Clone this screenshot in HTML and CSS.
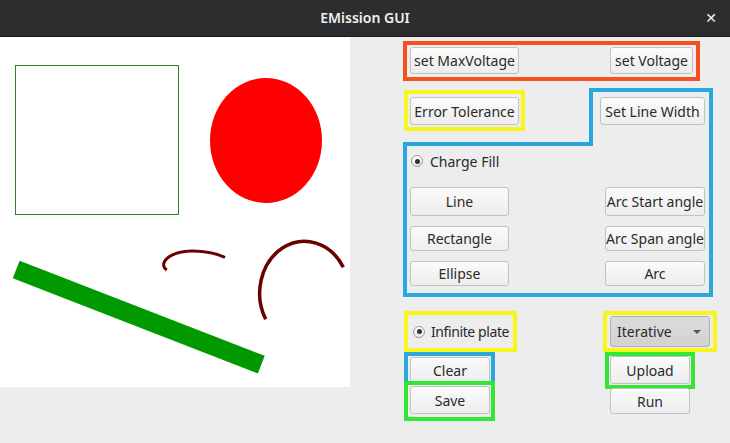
FILE: index.html
```html
<!DOCTYPE html>
<html>
<head>
<meta charset="utf-8">
<link rel="stylesheet" href="styles.css">
</head>
<body>
<div class="window">
  <div class="titlebar">
    <span class="title">EMission GUI</span>
    <span class="close">&#x2715;</span>
  </div>
  <div class="main">
    <div class="canvas">
      <svg width="350" height="350" viewBox="0 0 350 350">
        <rect x="15.5" y="28.5" width="163" height="149" fill="none" stroke="#2a882a" stroke-width="1"/>
        <ellipse cx="266" cy="103.5" rx="56" ry="62.5" fill="#ff0000"/>
        <line x1="16.2" y1="232.5" x2="261.3" y2="327.7" stroke="#009a00" stroke-width="19"/>
        <path d="M166.7,233 C158,227 168,214.5 192,214 C207,214 218,217 225,220.5" fill="none" stroke="#6b0000" stroke-width="3"/>
        <path d="M265.7,282.3 A44,51 0 1 1 343.3,230.3" fill="none" stroke="#6b0000" stroke-width="3.5"/>
      </svg>
    </div>
    <div class="panel">
      <div class="box orange row-voltage">
        <button class="btn w109">set MaxVoltage</button>
        <button class="btn w82">set Voltage</button>
      </div>
      <div class="row-tol">
        <div class="box yellow tol">
          <button class="btn w109 h28">Error Tolerance</button>
        </div>
        <div class="blue-tab">
          <button class="btn w105 h28">Set Line Width</button>
        </div>
      </div>
      <div class="blue-body">
        <label class="radio-row">
          <span class="radio"><span class="dot"></span></span>
          <span>Charge Fill</span>
        </label>
        <div class="shape-grid">
          <button class="btn w99 h29">Line</button>
          <button class="btn w100 h29">Arc Start angle</button>
          <button class="btn w99 h25">Rectangle</button>
          <button class="btn w100 h25">Arc Span angle</button>
          <button class="btn w99 h25">Ellipse</button>
          <button class="btn w100 h25">Arc</button>
        </div>
      </div>
      <div class="bottom">
        <div class="col-left">
          <div class="box yellow plate">
            <label class="radio-row plate-row">
              <span class="radio"><span class="dot"></span></span>
              <span class="plate-text">Infinite plate</span>
            </label>
          </div>
          <div class="clear-box">
            <button class="btn w80 h26">Clear</button>
          </div>
          <div class="box green save-box">
            <button class="btn w80 h28">Save</button>
          </div>
        </div>
        <div class="col-right">
          <div class="box yellow combo-box">
            <div class="combo">
              <span>Iterative</span>
              <span class="arrow"></span>
            </div>
          </div>
          <div class="box green upload-box">
            <button class="btn w80 h28">Upload</button>
          </div>
          <button class="btn w80 h26 run">Run</button>
        </div>
      </div>
    </div>
  </div>
</div>
</body>
</html>
```

FILE: styles.css
```css
* { box-sizing: border-box; }
html, body { margin: 0; padding: 0; }
body {
  width: 730px;
  height: 443px;
  overflow: hidden;
  background: #ededed;
  font-family: "Noto Sans", "DejaVu Sans", sans-serif;
  font-size: 14px;
  color: #2a2a2a;
}
.window { width: 730px; height: 443px; display: flex; flex-direction: column; }
.titlebar {
  height: 37px;
  background: #2c2d2f;
  border-bottom: 1px solid #1a1a1a;
  display: flex;
  align-items: center;
  justify-content: center;
  position: relative;
  flex: none;
}
.title {
  color: #f0f0ee;
  font-weight: 600;
  font-size: 14px;
  margin-top: -1px;
}
.close {
  position: absolute;
  right: 13px;
  top: 8px;
  color: #f4f4f4;
  font-weight: bold;
  font-size: 14px;
}
.main { display: flex; flex: 1; align-items: flex-start; }
.canvas { width: 350px; height: 350px; background: #ffffff; flex: none; }
.canvas svg { display: block; }
.panel { padding-left: 53px; width: 380px; display: flex; flex-direction: column; }

.btn {
  font-family: "Noto Sans", "DejaVu Sans", sans-serif;
  font-size: 14px;
  font-weight: 400;
  color: #2a2a2a;
  background: linear-gradient(#fbfbfb, #ededed);
  border: 1px solid #c2c2c2;
  border-radius: 3px;
  height: 27px;
  padding: 0;
  margin: 0;
  display: flex;
  align-items: center;
  justify-content: center;
  white-space: nowrap;
  flex: none;
}
.w80 { width: 80px; }
.w82 { width: 83px; }
.w99 { width: 99px; }
.w100 { width: 100px; }
.w105 { width: 105px; }
.w109 { width: 109px; }
.h25 { height: 25px; }
.h26 { height: 26px; }
.h28 { height: 28px; }
.h29 { height: 29px; }

.box { border: 4px solid; }
.orange { border-color: #f4511e; }
.yellow { border-color: #f8f51c; }
.green { border-color: #34e634; }

.row-voltage {
  margin-top: 4px;
  width: 297px;
  height: 40px;
  display: flex;
  justify-content: space-between;
  align-items: flex-start;
  padding: 2px 3px;
}
.row-tol {
  margin-top: 7px;
  width: 310px;
  display: flex;
  align-items: flex-start;
}
.tol {
  margin-top: 2px;
  margin-left: 1px;
  width: 121px;
  height: 41px;
  padding: 3px 2px;
}
.blue-tab {
  margin-left: auto;
  width: 124px;
  height: 58px;
  border: 4px solid #29a8e0;
  border-bottom: none;
  background: #ededed;
  padding: 5px 0 0 7px;
  position: relative;
  z-index: 1;
}
.blue-body {
  margin-top: -4px;
  width: 310px;
  height: 155px;
  border: 4px solid #29a8e0;
  padding: 3px 4px 0 3px;
}
.radio-row {
  display: flex;
  align-items: center;
  height: 24px;
  gap: 7px;
  padding-left: 1px;
  white-space: nowrap;
}
.plate-text { white-space: nowrap; letter-spacing: -0.4px; }
.radio {
  width: 12px;
  height: 12px;
  flex: none;
  border-radius: 50%;
  border: 1px solid #9a9a9a;
  background: linear-gradient(#ffffff, #e8e8e8);
  display: flex;
  align-items: center;
  justify-content: center;
}
.dot { width: 5px; height: 5px; border-radius: 50%; background: #333; }
.shape-grid {
  margin-top: 14px;
  display: grid;
  grid-template-columns: 99px 100px;
  justify-content: space-between;
  row-gap: 10px;
}

.bottom {
  margin-top: 14px;
  width: 314px;
  display: flex;
  justify-content: space-between;
  align-items: flex-start;
}
.col-left { margin-left: 1px; display: flex; flex-direction: column; }
.plate {
  width: 113px;
  height: 41px;
  display: flex;
  align-items: center;
  padding-left: 2px;
}
.plate-row { padding-left: 3px; gap: 6px; }
.clear-box {
  width: 91px;
  height: 30px;
  border: 4px solid #29a8e0;
  border-bottom: none;
  padding: 1px 0 0 2px;
  position: relative;
}
.save-box {
  width: 91px;
  height: 40px;
  padding: 1px 0 0 2px;
  background: #ededed;
  position: relative;
  z-index: 1;
  margin-top: -1px;
}
.col-right { display: flex; flex-direction: column; }
.combo-box {
  width: 114px;
  height: 41px;
  padding: 1px 0 0 3px;
}
.combo {
  width: 100px;
  height: 31px;
  border: 1px solid #b0b0b0;
  border-radius: 3px;
  background: linear-gradient(#dcdcdc, #d2d2d2);
  display: flex;
  align-items: center;
  justify-content: space-between;
  padding: 0 8px 0 6px;
}
.arrow {
  width: 0;
  height: 0;
  border-left: 4px solid transparent;
  border-right: 4px solid transparent;
  border-top: 4px solid #555;
}
.upload-box {
  margin-left: 2px;
  width: 90px;
  height: 37px;
  padding: 0 0 0 1px;
}
.run { margin-left: 7px; margin-top: -1px; }
```
